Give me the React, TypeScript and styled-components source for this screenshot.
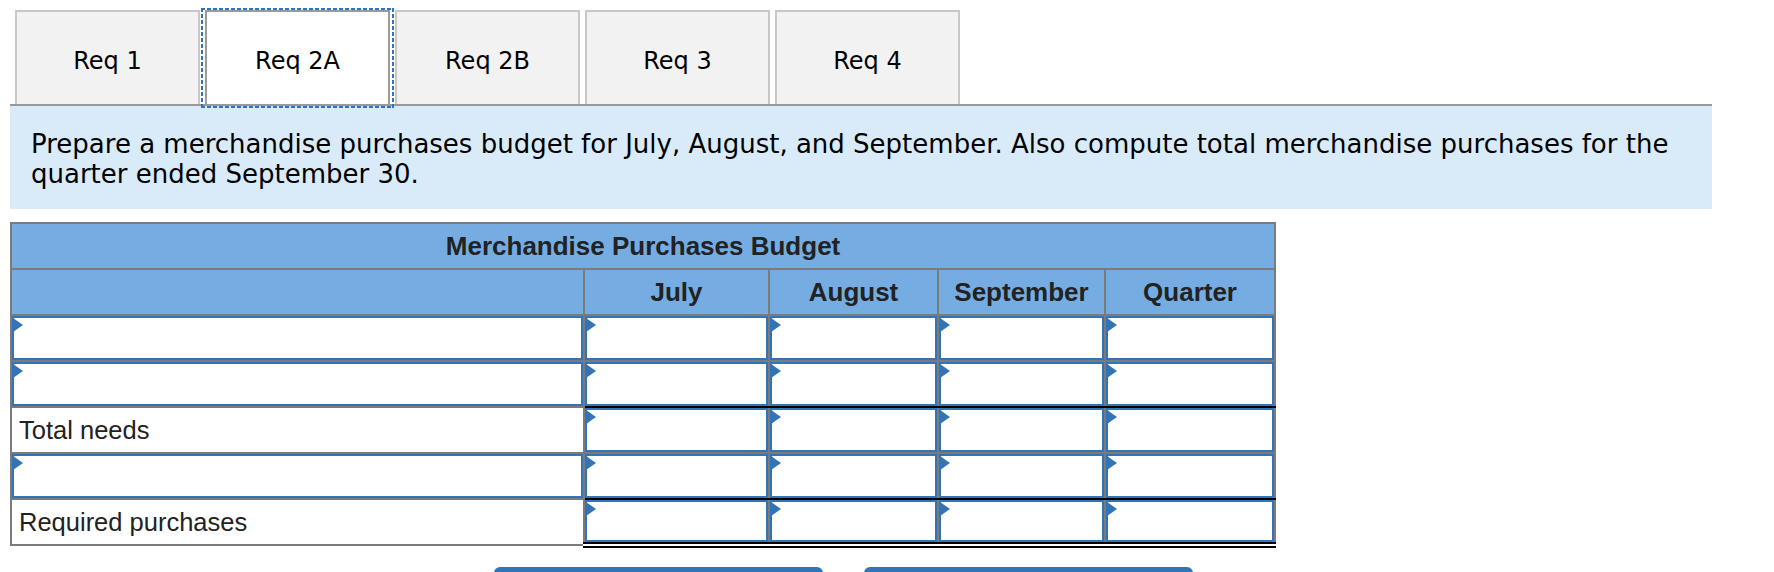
import React from "react";
import styled, { createGlobalStyle } from "styled-components";

const GlobalStyle = createGlobalStyle`
  html, body {
    margin: 0;
    padding: 0;
    background: #fff;
  }
  body {
    font-family: "DejaVu Sans", Verdana, sans-serif;
  }
`;

const Page = styled.div`
  padding: 10px 0 0 10px;
  width: 1702px;
`;

const TabList = styled.div`
  display: flex;
  gap: 5px;
  padding-left: 5px;
`;

// focus ring drawn as short dashes, like the browser's dotted focus outline
const dash = "#2f72c2";

const Tab = styled.button<{ $active?: boolean }>`
  position: relative;
  z-index: ${(p) => (p.$active ? 2 : 1)};
  width: 185px;
  height: 94px;
  box-sizing: border-box;
  padding: 5px 0 0;
  margin: 0;
  border: 2px solid ${(p) => (p.$active ? "#9a9a9a" : "#c8c8c8")};
  border-bottom: none;
  background: ${(p) => (p.$active ? "#fff" : "#f2f2f2")};
  font-family: "DejaVu Sans", Verdana, sans-serif;
  font-size: 24px;
  color: #000;
  cursor: pointer;
  outline: none;

  &::after {
    content: "";
    display: ${(p) => (p.$active ? "block" : "none")};
    position: absolute;
    left: -6px;
    right: -6px;
    top: -4px;
    bottom: -4px;
    pointer-events: none;
    background:
      repeating-linear-gradient(90deg, ${dash} 0 4px, transparent 4px 6px) top / 100% 2px no-repeat,
      repeating-linear-gradient(90deg, ${dash} 0 4px, transparent 4px 6px) bottom / 100% 2px no-repeat,
      repeating-linear-gradient(180deg, ${dash} 0 4px, transparent 4px 6px) left / 2px 100% no-repeat,
      repeating-linear-gradient(180deg, ${dash} 0 4px, transparent 4px 6px) right / 2px 100% no-repeat;
  }
`;

const Prompt = styled.div`
  box-sizing: border-box;
  width: 1702px;
  border-top: 2px solid #999;
  background: #d9ebf8;
  padding: 23px 10px 20px 21px;
  font-size: 26px;
  line-height: 30px;
  color: #000;
`;

const BudgetTable = styled.table`
  margin-top: 13px;
  width: 1264px;
  table-layout: fixed;
  border-collapse: collapse;
  font-family: "Liberation Sans", Arial, sans-serif;
  color: #222;
`;

const Col = styled.col<{ $w: number }>`
  width: ${(p) => p.$w}px;
`;

const HeadCell = styled.th`
  background: #75ade3;
  border: 2px solid #7b7b7b;
  padding: 0;
  height: 44px;
  line-height: 44px;
  font-size: 26px;
  font-weight: bold;
  text-align: center;
`;

const LabelCell = styled.td`
  background: #fff;
  border: 2px solid #7b7b7b;
  padding: 0 0 0 7px;
  height: 44px;
  line-height: 44px;
  font-size: 25.5px;
  white-space: nowrap;
`;

type Rule = "none" | "single" | "double";

const EntryCell = styled.td<{ $rule: Rule }>`
  background: #fff;
  border: 2px solid #7b7b7b;
  padding: 0;
  ${(p) => p.$rule === "single" && "border-bottom: 2px solid #000;"}
  ${(p) => p.$rule === "double" && "border-bottom: 6px double #000;"}
`;

const Entry = styled.div<{ $short?: boolean }>`
  position: relative;
  box-sizing: border-box;
  height: ${(p) => (p.$short ? 42 : 44)}px;
  border: 2px solid #3373b8;
  background: #fff;
`;

const Marker = styled.span`
  position: absolute;
  left: -1px;
  top: 0;
  width: 0;
  height: 0;
  border-top: 7px solid transparent;
  border-bottom: 7px solid transparent;
  border-left: 10px solid #3373b8;
`;

const ButtonBar = styled.div`
  display: flex;
  gap: 41px;
  margin-top: 19px;
  padding-left: 484px;
`;

const NavButton = styled.button`
  width: 329px;
  height: 44px;
  border: none;
  border-radius: 6px;
  background: #3373b8;
  cursor: pointer;
`;

const tabs = ["Req 1", "Req 2A", "Req 2B", "Req 3", "Req 4"];
const months = ["July", "August", "September", "Quarter"];

const rows: { label?: string; rule: Rule }[] = [
  { rule: "none" },
  { rule: "single" },
  { label: "Total needs", rule: "none" },
  { rule: "single" },
  { label: "Required purchases", rule: "double" },
];

const Field = ({ short }: { short?: boolean }) => (
  <Entry $short={short}>
    <Marker />
  </Entry>
);

export default function App() {
  return (
    <Page>
      <GlobalStyle />
      <TabList>
        {tabs.map((t) => (
          <Tab key={t} $active={t === "Req 2A"}>
            {t}
          </Tab>
        ))}
      </TabList>
      <Prompt>
        Prepare a merchandise purchases budget for July, August, and September. Also compute
        total merchandise purchases for the quarter ended September 30.
      </Prompt>
      <BudgetTable>
        <colgroup>
          <Col $w={573} />
          <Col $w={185} />
          <Col $w={169} />
          <Col $w={167} />
          <Col $w={170} />
        </colgroup>
        <thead>
          <tr>
            <HeadCell colSpan={5}>Merchandise Purchases Budget</HeadCell>
          </tr>
          <tr>
            <HeadCell />
            {months.map((m) => (
              <HeadCell key={m}>{m}</HeadCell>
            ))}
          </tr>
        </thead>
        <tbody>
          {rows.map((r, i) => (
            <tr key={i}>
              {r.label ? (
                <LabelCell>{r.label}</LabelCell>
              ) : (
                <EntryCell $rule="none">
                  <Field />
                </EntryCell>
              )}
              {months.map((m) => (
                <EntryCell key={m} $rule={r.rule}>
                  <Field short={r.rule === "double"} />
                </EntryCell>
              ))}
            </tr>
          ))}
        </tbody>
      </BudgetTable>
      <ButtonBar>
        <NavButton aria-label="Previous requirement" />
        <NavButton aria-label="Next requirement" />
      </ButtonBar>
    </Page>
  );
}
